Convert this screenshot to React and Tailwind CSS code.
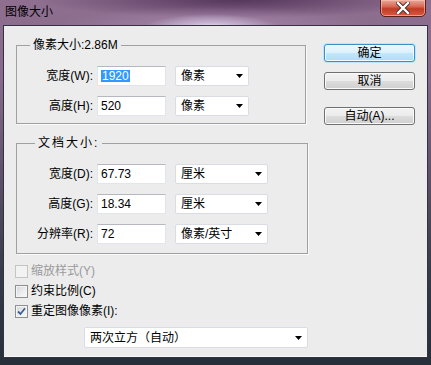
import React from "react";

const FONT = { fontFamily: '"Liberation Sans", "Noto Sans CJK SC", sans-serif' };

function Arrow() {
  return (
    <svg width="7" height="4" viewBox="0 0 7 4" className="shrink-0">
      <path d="M0 0H7L3.5 4Z" fill="#000" />
    </svg>
  );
}

function Select({ w, text, h = "h-[20px]" }) {
  return (
    <div
      className={`${w} ${h} flex items-center justify-between bg-white border border-[#d9dde3] rounded-[2px] pl-[5px] pr-[5px]`}
    >
      <span className="leading-[14px]">{text}</span>
      <Arrow />
    </div>
  );
}

function Input({ children }) {
  return (
    <div className="w-[69px] h-[20px] flex items-center bg-white border border-[#e2e6ec] border-t-[#b5b8be] pl-[3px]">
      {children}
    </div>
  );
}

function Row({ label, value, unit, selW }) {
  return (
    <div className="flex items-center h-[20px]">
      <div className="w-[76px] text-right leading-[14px]">{label}</div>
      <div className="ml-[4px]">
        <Input>{value}</Input>
      </div>
      <div className="ml-[9px]">
        <Select w={selW} text={unit} />
      </div>
    </div>
  );
}

function Button({ children, primary }) {
  const cls = primary
    ? "border-[#3c8fc4] bg-[linear-gradient(180deg,#ecf7fd_0%,#dcf1fc_50%,#c3e7fb_50%,#aedcf4_100%)] shadow-[0_0_0_1px_#bfe6f8,inset_0_0_0_1px_#f4fbfe]"
    : "border-[#707070] bg-[linear-gradient(180deg,#f3f3f3_0%,#ebebeb_50%,#dddddd_50%,#cfcfcf_100%)] shadow-[inset_0_0_0_1px_#fafafa]";
  return (
    <div
      className={`w-[91px] h-[18px] border rounded-[3px] flex items-center justify-center leading-[14px] ${cls}`}
    >
      {children}
    </div>
  );
}

function Check({ checked, disabled, label }) {
  return (
    <div className="flex items-center h-[20px] -ml-[1px]">
      <div
        className={`w-[13px] h-[13px] border flex items-center justify-center ${
          disabled
            ? "border-[#c4c4c4] bg-[#f2f2f2]"
            : "border-[#8e8f8f] bg-[linear-gradient(135deg,#d4d7dc_0%,#eceef0_60%,#f8f8f8_100%)] shadow-[inset_0_0_0_1px_#f4f4f4]"
        }`}
      >
        {checked && (
          <svg width="9" height="9" viewBox="0 0 9 9">
            <path d="M1 4.5L3.5 7L8 1.2" stroke="#3f5f91" strokeWidth="1.8" fill="none" />
          </svg>
        )}
      </div>
      <span className={`ml-[3px] leading-[14px] ${disabled ? "text-[#9a9a9a]" : "text-black"}`}>
        {label}
      </span>
    </div>
  );
}

export default function App() {
  return (
    <div
      style={FONT}
      className="w-[431px] h-[365px] text-[12px] text-black overflow-hidden bg-[linear-gradient(180deg,#8f6f90_0%,#87698b_22%,#5e5169_48%,#353b49_75%,#262f39_100%)]"
    >
      {/* title bar */}
      <div className="h-[25px] flex justify-between bg-[radial-gradient(ellipse_70px_16px_at_49%_120%,rgba(255,255,255,1)_0%,rgba(225,215,240,0.6)_45%,transparent_100%),radial-gradient(ellipse_160px_22px_at_50%_115%,rgba(190,160,200,0.5)_0%,transparent_100%),radial-gradient(ellipse_200px_18px_at_55%_0%,rgba(60,30,70,0.7)_0%,transparent_100%)]">
        <div className="pl-[5px] pt-[5px] text-[12px] leading-[14px] text-black">图像大小</div>
        <div className="mr-[5px] w-[46px] h-[18px] -mt-[1px] rounded-b-[5px] border border-[#5a1f18] bg-[linear-gradient(180deg,#e9a99a_0%,#d76a55_40%,#c23a25_55%,#d55a40_100%)] shadow-[inset_0_0_0_1px_rgba(255,200,190,0.6)] flex items-center justify-center">
          <svg width="14" height="12" viewBox="0 0 14 12">
            <path d="M2 1L12 11M12 1L2 11" stroke="#4a2a2a" strokeWidth="4.2" strokeLinecap="square" />
            <path d="M2 1L12 11M12 1L2 11" stroke="#ffffff" strokeWidth="2.4" strokeLinecap="square" />
          </svg>
        </div>
      </div>

      {/* content */}
      <div className="ml-[3px] w-[425px] h-[333px] border border-[#2f3440] bg-[#ececec] shadow-[inset_0_-1px_0_#f8f8f8]">
        <div className="flex">
          <div className="ml-[12px] w-[292px] shrink-0">
            <fieldset className="mt-[12px] w-[290px] border border-[#a0a0a0] pb-[7px] shadow-[1px_1px_0_#fafafa]">
              <legend className="ml-[13px] px-[3px] leading-[14px]">像素大小:2.86M</legend>
              <div className="mt-[14px] flex flex-col gap-[10px]">
                <Row
                  label="宽度(W):"
                  value={
                    <span className="bg-[#3399ff] text-white leading-[12px] px-[1px]">1920</span>
                  }
                  unit="像素"
                  selW="w-[74px]"
                />
                <Row label="高度(H):" value="520" unit="像素" selW="w-[74px]" />
              </div>
            </fieldset>

            <fieldset className="mt-[12px] w-[292px] border border-[#a0a0a0] pb-[9px] shadow-[1px_1px_0_#fafafa]">
              <legend className="ml-[18px] px-[3px] leading-[14px] tracking-[2px]">文档大小:</legend>
              <div className="mt-[14px] flex flex-col gap-[10px]">
                <Row label="宽度(D):" value="67.73" unit="厘米" selW="w-[93px]" />
                <Row label="高度(G):" value="18.34" unit="厘米" selW="w-[93px]" />
                <Row label="分辨率(R):" value="72" unit="像素/英寸" selW="w-[93px]" />
              </div>
            </fieldset>

            <div className="mt-[7px]">
              <Check disabled label="缩放样式(Y)" />
              <Check label="约束比例(C)" />
              <Check checked label="重定图像像素(I):" />
            </div>

            <div className="mt-[6px] ml-[68px]">
              <Select w="w-[224px]" h="h-[21px]" text="两次立方（自动）" />
            </div>
          </div>

          <div className="ml-[16px] pt-[18px] flex flex-col">
            <Button primary>确定</Button>
            <div className="mt-[10px]">
              <Button>取消</Button>
            </div>
            <div className="mt-[17px]">
              <Button>自动(A)...</Button>
            </div>
          </div>
        </div>
      </div>
    </div>
  );
}
